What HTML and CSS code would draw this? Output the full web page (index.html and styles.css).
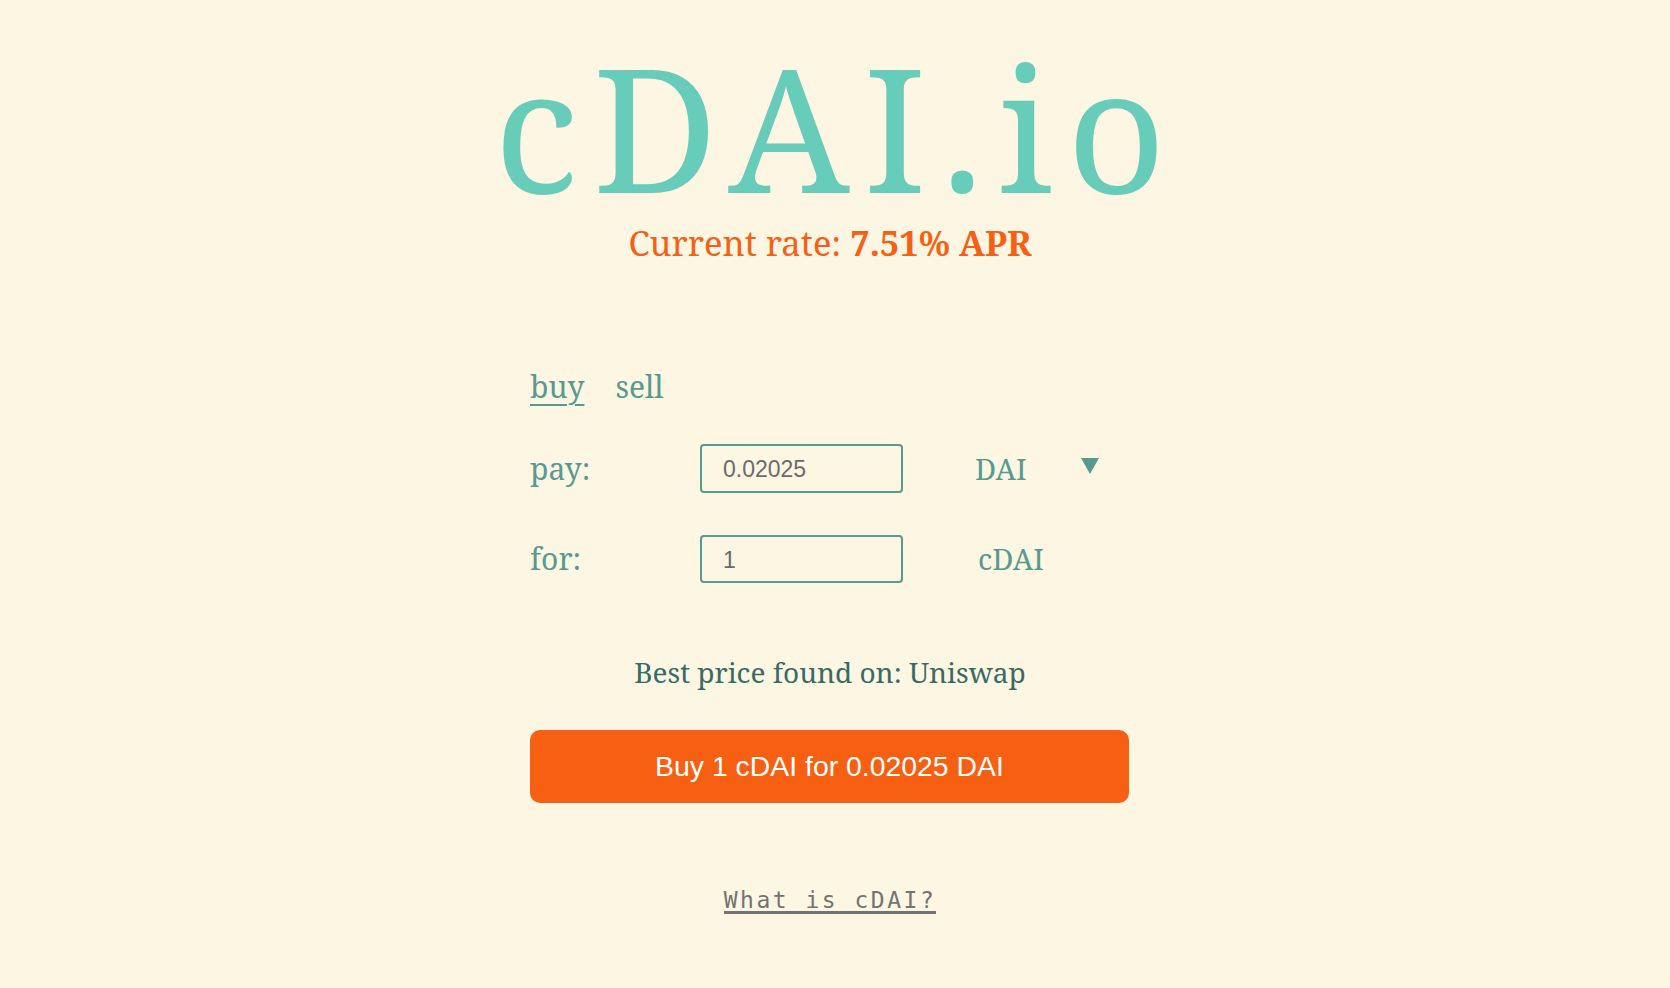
FILE: index.html
```html
<!DOCTYPE html>
<html lang="en">
<head>
<meta charset="utf-8">
<title>cDAI.io</title>
<link rel="stylesheet" href="styles.css">
</head>
<body>
<main class="page">
  <header class="hero">
    <h1 class="logo">cDAI.io</h1>
    <p class="rate">Current rate: <strong>7.51% APR</strong></p>
  </header>

  <section class="trade">
    <nav class="tabs">
      <a class="tab active" href="#">buy</a>
      <a class="tab" href="#">sell</a>
    </nav>

    <div class="row">
      <label class="label" for="pay">pay:</label>
      <input class="amount" id="pay" type="text" value="0.02025">
      <div class="select">
        <span class="currency">DAI</span>
        <svg class="caret" width="18" height="16" viewBox="0 0 18 16"><path d="M0 0H18L9 16Z" fill="#579a91"/></svg>
      </div>
    </div>

    <div class="row second">
      <label class="label" for="for">for:</label>
      <input class="amount" id="for" type="text" value="1">
      <div class="select">
        <span class="currency c">cDAI</span>
      </div>
    </div>

    <p class="best">Best price found on: Uniswap</p>

    <button class="buy-btn" type="button">Buy 1 cDAI for 0.02025 DAI</button>

    <p class="about"><a href="#">What is cDAI?</a></p>
  </section>
</main>
</body>
</html>
```

FILE: styles.css
```css
html, body {
  margin: 0;
  padding: 0;
  background: #fdf6e3;
}

body {
  padding-right: 10px;
  font-family: "Noto Serif", "Liberation Serif", serif;
}

.page {
  width: 600px;
  margin: 0 auto;
}

.hero {
  text-align: center;
  padding-top: 36px;
}

.logo {
  margin: 0 -200px;
  font-size: 172px;
  line-height: 180px;
  font-weight: normal;
  color: #68ccba;
  letter-spacing: 14px;
  text-indent: 14px;
  white-space: nowrap;
}

.rate {
  margin: 5px 0 0;
  font-size: 34.5px;
  line-height: 44px;
  color: #f76012;
}

.rate strong {
  font-weight: bold;
}

.trade {
  padding-top: 102px;
}

.tabs {
  display: flex;
  gap: 31px;
  height: 40px;
}

.tab {
  font-size: 30px;
  line-height: 40px;
  color: #579a91;
  text-decoration: none;
}

.tab.active {
  text-decoration: underline;
  text-underline-offset: 6px;
  text-decoration-thickness: 2px;
}

.row {
  display: grid;
  grid-template-columns: 170px 203px 1fr;
  align-items: center;
  height: 49px;
  margin-top: 37px;
}

.row.second {
  margin-top: 42px;
  height: 48px;
}

.label {
  font-size: 30px;
  line-height: 38px;
  color: #579a91;
}

.amount {
  box-sizing: border-box;
  width: 203px;
  height: 100%;
  border: 2px solid #579a91;
  border-radius: 4px;
  background: transparent;
  padding: 2px 0 0 21px;
  font-family: "Liberation Sans", Arial, sans-serif;
  font-size: 23px;
  color: #6b6b6b;
  outline: none;
}

.select {
  display: flex;
  align-items: center;
  justify-content: space-between;
  width: 196px;
  padding-left: 72px;
  box-sizing: border-box;
}

.currency {
  font-size: 29px;
  line-height: 38px;
  color: #579a91;
  white-space: nowrap;
}

.currency.c {
  margin-left: 3px;
}

.caret {
  display: block;
  margin-top: -6px;
}

.best {
  margin: 69px 0 0;
  text-align: center;
  font-size: 28px;
  line-height: 40px;
  color: #376b66;
}

.buy-btn {
  display: block;
  width: 599px;
  height: 73px;
  margin-top: 38px;
  border: none;
  border-radius: 10px;
  background: #f76012;
  color: #fff;
  font-family: "Liberation Sans", Arial, sans-serif;
  font-size: 28.4px;
  padding: 0;
}

.about {
  margin: 84px 0 0;
  text-align: center;
  font-family: "DejaVu Sans Mono", "Liberation Mono", monospace;
  font-size: 23px;
  line-height: 27px;
}

.about a {
  display: inline-block;
  color: #737373;
  letter-spacing: 2.5px;
  text-decoration: none;
  border-bottom: 3px solid #737373;
  line-height: 22px;
}
```
